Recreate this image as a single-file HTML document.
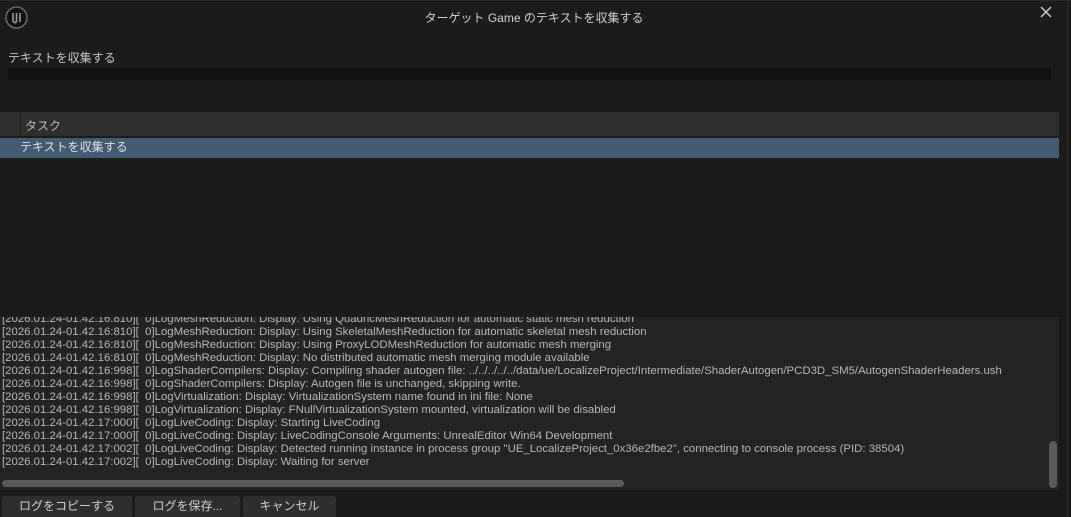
<!DOCTYPE html>
<html><head><meta charset="utf-8"><style>
body{margin:0;width:1071px;height:517px;background:#1b1b1b;overflow:hidden;position:relative;font-family:"Liberation Sans","Noto Sans CJK JP",sans-serif;color:#c0c0c0}
.a{position:absolute}
.log div{height:13px;line-height:13px;font-size:11.4px;white-space:nowrap;color:#b8b8b8}
.btn{position:absolute;top:496px;height:21px;background:#2e2e2e;border-radius:2px;color:#d0d0d0;font-size:12px;line-height:21px;text-align:center}
</style></head><body>
<div class="a" style="left:0;top:0;width:1071px;height:1px;background:#2a2a2a"></div>
<div class="a" style="left:1067px;top:0;width:1px;height:517px;background:#2c2c2c"></div>
<svg class="a" style="left:5px;top:6px" width="23" height="23" viewBox="0 0 23 23"><circle cx="11.5" cy="11.5" r="10.5" fill="#111" stroke="#6a6a6a" stroke-width="1.5"/><path d="M8 7v7c0 2 2 3 3.5 2.5M11.5 7v9M15 7v9" stroke="#999" stroke-width="1.6" fill="none"/></svg>
<div class="a" style="left:0;width:1068px;top:9px;text-align:center;font-size:12px;color:#d0d0d0">ターゲット Game のテキストを収集する</div>
<svg class="a" style="left:1040px;top:6px" width="12" height="12" viewBox="0 0 12 12"><path d="M1 1L11 11M11 1L1 11" stroke="#ccc" stroke-width="1.5"/></svg>
<div class="a" style="left:8px;top:49px;font-size:12px;color:#c8c8c8">テキストを収集する</div>
<div class="a" style="left:8px;top:68px;width:1043px;height:12px;background:#111"></div>
<div class="a" style="left:0;top:112px;width:1059px;height:24px;background:#2f2f2f"></div>
<div class="a" style="left:20px;top:112px;width:1px;height:24px;background:#1b1b1b"></div>
<div class="a" style="left:25px;top:117px;font-size:12px;color:#bbb">タスク</div>
<div class="a" style="left:0;top:138px;width:1059px;height:20px;background:#435a73"></div>
<div class="a" style="left:20px;top:139px;font-size:12px;line-height:16px;color:#e0e0e0">テキストを収集する</div>
<div class="a" style="left:0;top:317px;width:1059px;height:173px;background:#232323;overflow:hidden">
<div class="log a" style="left:2px;top:-4px">
<div>[2026.01.24-01.42.16:810][&nbsp; 0]LogMeshReduction: Display: Using QuadricMeshReduction for automatic static mesh reduction</div>
<div>[2026.01.24-01.42.16:810][&nbsp; 0]LogMeshReduction: Display: Using SkeletalMeshReduction for automatic skeletal mesh reduction</div>
<div>[2026.01.24-01.42.16:810][&nbsp; 0]LogMeshReduction: Display: Using ProxyLODMeshReduction for automatic mesh merging</div>
<div>[2026.01.24-01.42.16:810][&nbsp; 0]LogMeshReduction: Display: No distributed automatic mesh merging module available</div>
<div>[2026.01.24-01.42.16:998][&nbsp; 0]LogShaderCompilers: Display: Compiling shader autogen file: ../../../../../data/ue/LocalizeProject/Intermediate/ShaderAutogen/PCD3D_SM5/AutogenShaderHeaders.ush</div>
<div>[2026.01.24-01.42.16:998][&nbsp; 0]LogShaderCompilers: Display: Autogen file is unchanged, skipping write.</div>
<div>[2026.01.24-01.42.16:998][&nbsp; 0]LogVirtualization: Display: VirtualizationSystem name found in ini file: None</div>
<div>[2026.01.24-01.42.16:998][&nbsp; 0]LogVirtualization: Display: FNullVirtualizationSystem mounted, virtualization will be disabled</div>
<div>[2026.01.24-01.42.17:000][&nbsp; 0]LogLiveCoding: Display: Starting LiveCoding</div>
<div>[2026.01.24-01.42.17:000][&nbsp; 0]LogLiveCoding: Display: LiveCodingConsole Arguments: UnrealEditor Win64 Development</div>
<div>[2026.01.24-01.42.17:002][&nbsp; 0]LogLiveCoding: Display: Detected running instance in process group "UE_LocalizeProject_0x36e2fbe2", connecting to console process (PID: 38504)</div>
<div>[2026.01.24-01.42.17:002][&nbsp; 0]LogLiveCoding: Display: Waiting for server</div>
</div>
<div class="a" style="left:2px;top:163px;width:622px;height:7px;border-radius:4px;background:#5a5a5a"></div>
<div class="a" style="left:1049px;top:124px;width:8px;height:47px;border-radius:4px;background:#5a5a5a"></div>
</div>
<div class="btn" style="left:2px;width:130px">ログをコピーする</div>
<div class="btn" style="left:135px;width:105px">ログを保存...</div>
<div class="btn" style="left:243px;width:93px">キャンセル</div>
</body></html>
